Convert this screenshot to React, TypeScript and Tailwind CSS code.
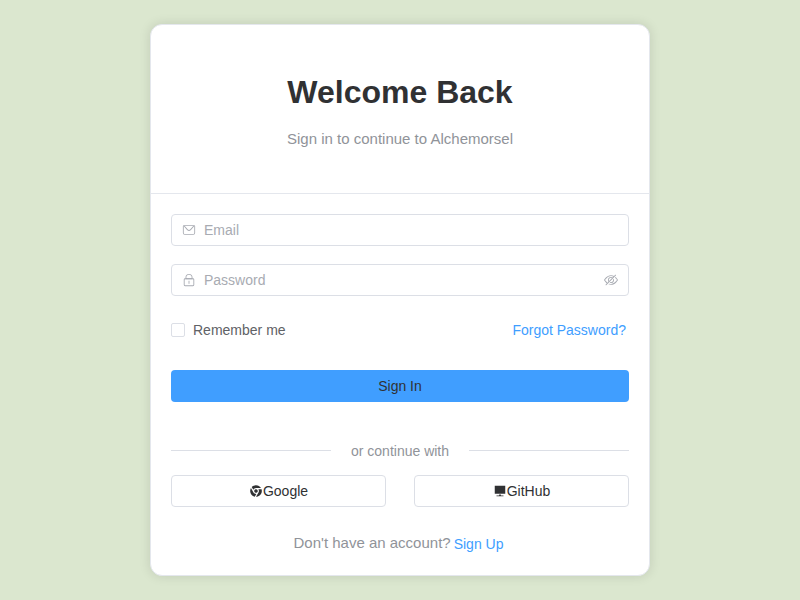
const Mail = () => (
  <svg viewBox="0 0 1024 1024" className="size-3.5" fill="currentColor">
    <path d="M128 224v512a64 64 0 0 0 64 64h640a64 64 0 0 0 64-64V224zm0-64h768a64 64 0 0 1 64 64v512a128 128 0 0 1-128 128H192A128 128 0 0 1 64 736V224a64 64 0 0 1 64-64" />
    <path d="M904 224 656.512 506.880a192 192 0 0 1-289.024 0L120 224zm-698.944 0 210.560 240.704a128 128 0 0 0 192.704 0L818.944 224z" />
  </svg>
);

const Lock = () => (
  <svg viewBox="0 0 1024 1024" className="size-3.5" fill="currentColor">
    <path d="M224 448a32 32 0 0 0-32 32v384a32 32 0 0 0 32 32h576a32 32 0 0 0 32-32V480a32 32 0 0 0-32-32zm0-64h576a96 96 0 0 1 96 96v384a96 96 0 0 1-96 96H224a96 96 0 0 1-96-96V480a96 96 0 0 1 96-96" />
    <path d="M512 544a32 32 0 0 1 32 32v192a32 32 0 1 1-64 0V576a32 32 0 0 1 32-32m192-160v-64a192 192 0 1 0-384 0v64zM512 64a256 256 0 0 1 256 256v128H256V320A256 256 0 0 1 512 64" />
  </svg>
);

const Hide = () => (
  <svg viewBox="0 0 1024 1024" className="size-3.5" fill="currentColor">
    <path d="M876.800 156.800c0-9.600-3.200-16-9.600-22.400s-12.800-9.600-22.400-9.600-16 3.200-22.400 9.600L736 220.800c-64-32-137.600-51.200-224-60.800-160 16-288 73.600-377.600 176S0 496 0 512s48 73.600 134.400 176c22.400 25.600 44.800 48 73.600 67.200l-86.400 89.600c-6.400 6.400-9.600 12.800-9.600 22.400s3.200 16 9.600 22.400 12.800 9.600 22.400 9.600 16-3.200 22.400-9.600l704-710.400c3.200-6.400 6.400-12.800 6.400-22.400m-646.400 528Q115.200 579.200 76.800 512q43.200-72 153.600-172.800C304 272 400 230.400 512 224c64 3.200 124.800 19.200 176 44.800l-54.400 54.400C598.400 300.800 560 288 512 288c-64 0-115.200 22.400-160 64s-64 96-64 160c0 48 12.800 89.600 35.200 124.800L256 707.200c-9.600-6.400-19.200-16-25.600-22.400m140.800-96Q352 555.200 352 512c0-44.800 16-83.200 48-112s67.200-48 112-48c28.800 0 54.400 6.400 73.600 19.200zM889.600 336c-12.800-16-28.800-28.800-41.600-41.600l-48 48c16 12.800 28.800 25.600 41.600 38.400q97.600 91.200 105.600 131.200-43.200 72-153.600 172.800C716.800 751.200 620.800 793.600 512 800c-48 0-92.800-9.600-134.400-22.400l-51.200 51.200C384 848 444.800 860.800 512 864c160-16 288-73.600 377.600-176C979.200 585.600 1024 528 1024 512s-48-73.600-134.400-176" />
    <path d="M511.998 672c-12.800 0-25.600-3.200-38.400-6.400l-51.200 51.200c28.800 12.800 57.600 19.200 89.600 19.200 64 0 115.200-22.400 160-64 41.600-41.600 64-96 64-160 0-32-6.400-64-19.200-89.600l-51.200 51.200c3.200 12.800 6.400 25.600 6.400 38.400 0 44.800-16 83.200-48 112s-67.200 48-112 48" />
  </svg>
);

const Chrome = () => (
  <svg viewBox="0 0 1024 1024" className="size-3.5" fill="currentColor">
    <path d="M938.670 512.010c0-44.590-6.820-87.600-19.540-128H682.670a212.372 212.372 0 0 1 42.670 128c.060 38.710-10.450 76.700-30.420 109.870l-182.910 316.800c235.650-.010 426.660-191.020 426.660-426.670" />
    <path d="M576.790 401.630a127.920 127.920 0 0 0-63.560-17.600c-22.360-.220-44.390 5.430-63.890 16.380s-35.790 26.820-47.250 46.020a128.005 128.005 0 0 0-2.160 127.440l1.240 2.130a127.906 127.906 0 0 0 46.360 46.610 127.907 127.907 0 0 0 63.380 17.440c22.290.200 44.240-5.430 63.680-16.330a127.940 127.940 0 0 0 47.160-45.790v-.010l1.110-1.920a127.984 127.984 0 0 0 .290-127.460 127.957 127.957 0 0 0-46.360-46.910" />
    <path d="M394.450 333.960A213.336 213.336 0 0 1 512 298.670h369.580A426.503 426.503 0 0 0 512 85.340a425.598 425.598 0 0 0-171.740 35.980 425.644 425.644 0 0 0-142.620 102.220l118.140 204.630a213.397 213.397 0 0 1 78.670-94.210m117.560 604.720H512zm-97.250-236.730a213.284 213.284 0 0 1-89.540-86.810L142.480 298.600c-36.350 62.810-57.130 135.680-57.130 213.420 0 203.810 142.930 374.220 333.950 416.550h.040l118.190-204.710a213.315 213.315 0 0 1-122.770-21.910" />
  </svg>
);

const Monitor = () => (
  <svg viewBox="0 0 1024 1024" className="size-3.5" fill="currentColor">
    <path d="M448 832v-64h128v64h192v64H256v-64zM128 704V128h768v576z" />
  </svg>
);

export default function App() {
  return (
    <main className="flex h-[600px] w-full items-center justify-center bg-[#dbe7cf] font-['Liberation_Sans',Arial,sans-serif] text-sm text-[#606266]">
      <section className="flex h-[552px] w-[500px] flex-col overflow-hidden rounded-xl border border-[#e4e7ed] bg-white shadow-[0_0_12px_rgba(0,0,0,0.12)]">
        <header className="flex h-[169px] flex-col items-center border-b border-[#e4e7ed] pt-[49px]">
          <h1 className="text-[32px] leading-[37px] font-bold text-[#303133]">Welcome Back</h1>
          <p className="mt-[19px] text-[15px] leading-[18px] text-[#909399]">Sign in to continue to Alchemorsel</p>
        </header>
        <form className="flex flex-col px-5 pt-5">
          <label className="flex h-8 items-center gap-2 rounded border border-[#dcdfe6] px-2.5 text-[#a8abb2]">
            <Mail />
            <span>Email</span>
          </label>
          <label className="mt-[18px] flex h-8 items-center gap-2 rounded border border-[#dcdfe6] px-2.5 text-[#a8abb2]">
            <Lock />
            <span className="grow">Password</span>
            <Hide />
          </label>
          <div className="mt-[18px] flex h-8 items-center justify-between pr-[3px]">
            <label className="flex items-center gap-2">
              <span className="size-3.5 rounded-xs border border-[#dcdfe6] bg-white" />
              Remember me
            </label>
            <a className="text-[#409eff]">Forgot Password?</a>
          </div>
          <button type="button" className="mt-6 h-8 rounded bg-[#409eff] text-[#303133]">Sign In</button>
          <div className="mt-[39px] flex h-5 items-center gap-5 text-[#909399]">
            <span className="mb-px h-px grow bg-[#dcdfe6]" />
            <span>or continue with</span>
            <span className="mb-px h-px grow bg-[#dcdfe6]" />
          </div>
          <div className="mt-[14px] grid grid-cols-2 gap-7 text-[#303133]">
            <button type="button" className="flex h-8 items-center justify-center rounded border border-[#dcdfe6]">
              <Chrome />
              Google
            </button>
            <button type="button" className="flex h-8 items-center justify-center rounded border border-[#dcdfe6]">
              <Monitor />
              GitHub
            </button>
          </div>
          <p className="mt-[26px] flex h-5 items-center justify-center gap-[3px] pr-[3px] text-[15px] text-[#909399]">
            Don't have an account?
            <a className="pt-0.5 text-sm text-[#409eff]">Sign Up</a>
          </p>
        </form>
      </section>
    </main>
  );
}
